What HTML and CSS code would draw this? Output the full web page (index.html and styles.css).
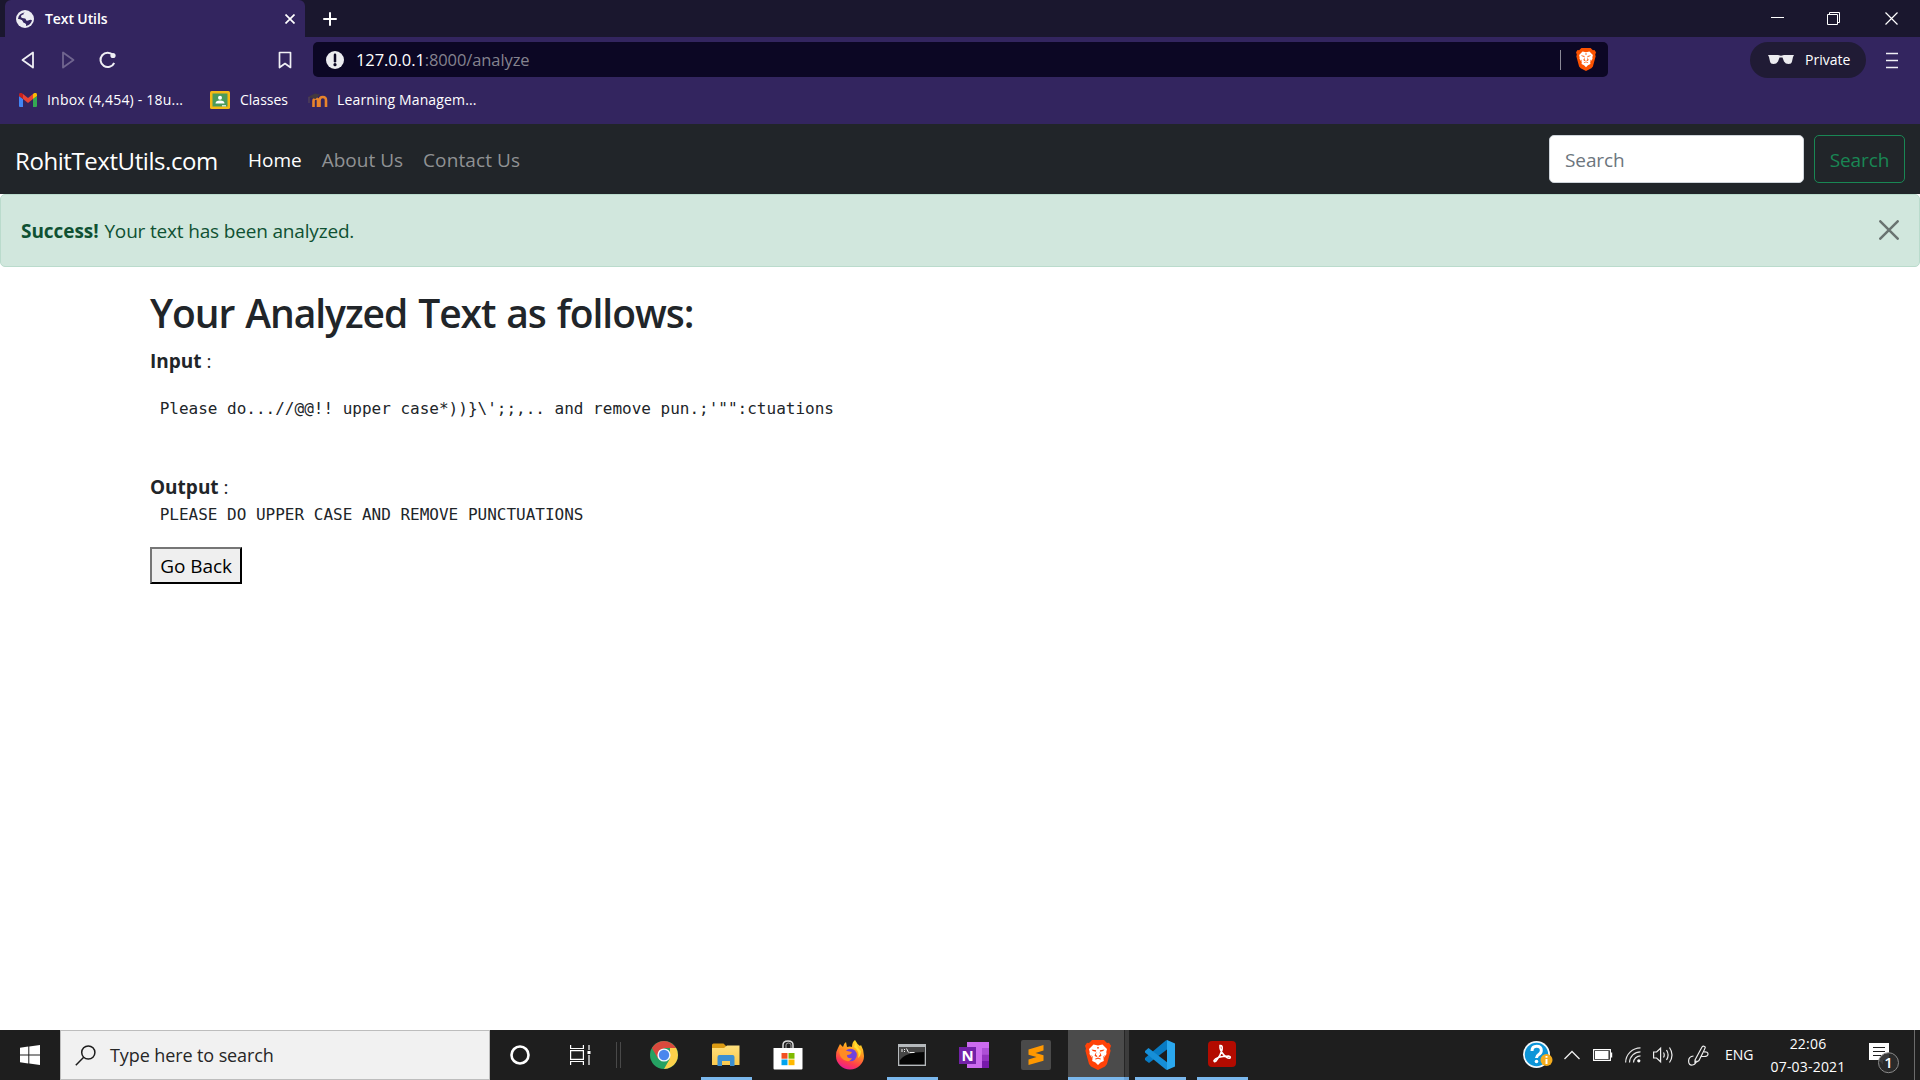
FILE: index.html
```html
<!DOCTYPE html>
<html lang="en">
<head>
<meta charset="utf-8">
<title>Text Utils</title>
<link rel="stylesheet" href="styles.css">
</head>
<body>
<svg width="0" height="0" class="defs" aria-hidden="true">
  <defs>
    <linearGradient id="flame" x1="0.7" y1="0" x2="0.3" y2="1"><stop offset="0" stop-color="#ffe226"/><stop offset="0.4" stop-color="#ff9020"/><stop offset="0.75" stop-color="#ff3c4e"/><stop offset="1" stop-color="#e5189a"/></linearGradient>
    <linearGradient id="folder" x1="0" y1="0" x2="0" y2="1"><stop offset="0" stop-color="#ffe07d"/><stop offset="1" stop-color="#fbc94d"/></linearGradient>
    <symbol id="lion" viewBox="0 0 26 30">
      <path d="M7 0h12l3 3 2-.3 2 3-1 3 .6 2-3.600 13.300-2 2.500L13 30l-7-3.500-2-2.500L.4 10.700 1 8.700l-1-3 2-3L4 3z"/>
      <path fill="#fff" d="M8.500 4.500l4.500 1 4.500-1L22 9l-.7 3 .2 2-3 4.500.3 2.500-3.300 1.500-2.500 2.500-2.500-2.500L7.200 21l.3-2.500-3-4.500.2-2L4 9z"/>
      <path d="M6.500 9.500l4.700.8-.4 1.400-3-.8zM19.500 9.500l-4.700.8.4 1.400 3-.8zM12.400 7h1.200l.3 1-.9 1-.9-1zM11.500 11.500l-.6 3.300 1.700 1.500-1.400.8-1.700-1.600zM14.500 11.500l.6 3.300-1.700 1.500 1.400.8 1.700-1.600zM10 18.800l3-1.200 3 1.200-.5.700-2.500-.8-2.500.8zM6.300 14.800l1.500 2.200-.6 1.200zM19.700 14.800L18.200 17l.6 1.200z"/>
    </symbol>
  </defs>
</svg>

<header class="browser">
  <div class="tabstrip">
    <div class="tab">
      <svg class="globe" width="18" height="18" viewBox="0 0 18 18"><circle cx="9" cy="9" r="9" fill="#ececf2"/><path d="M9 2.200Q7 3 7.500 4.500 5 4.500 5 6.500t3 1.700q2 0 2 1.600t3.500.3q1.500-.8 2.500.2-1 4.700-6 5.700.7-2-1-2.700-2-.3-2.500-2Q6 9.500 2 9 2.500 3.500 9 2.200z" fill="#33255f"/><path d="M2.200 9.500L6 10.300l1 2.200v3Q3 14 2.200 9.500z" fill="#ececf2"/></svg>
      <span class="tab-title">Text Utils</span>
      <svg width="10" height="10" viewBox="0 0 10 10" fill="none" stroke="#fff" stroke-width="1.700"><path d="M.5.5l9 9M9.500.5l-9 9"/></svg>
    </div>
    <svg class="new-tab" width="14" height="14" viewBox="0 0 14 14" stroke="#fff" stroke-width="2" stroke-linecap="round"><path d="M7 1v12M1 7h12"/></svg>
    <svg class="win-controls" width="127" height="13" viewBox="0 0 127 13" fill="none" stroke="#fff"><path d="M0 5.500h13M56.500 2.500h10v10h-10zM58.500 2.500v-2h10v10h-2"/><path d="M114.500.5l12 12M126.500.5l-12 12" stroke-width="1.200"/></svg>
  </div>

  <div class="toolbar">
    <svg class="nav-buttons" width="96" height="18" viewBox="0 0 96 18" fill="none" stroke-width="1.800" stroke-linejoin="round"><path d="M12 1.500v15L1.500 9z" stroke="#efeff4"/><path d="M42 1.500v15L52.500 9z" stroke="#70658f"/><path d="M92 4a7.200 7.200 0 1 0 1.200 8" stroke="#efeff4" stroke-width="2"/><circle cx="92" cy="4.500" r="2.600" fill="#efeff4"/></svg>
    <svg class="bookmark" width="14" height="18" viewBox="0 0 14 18" fill="none" stroke="#efeff4" stroke-width="1.700" stroke-linejoin="round"><path d="M1.500 1.500h11v15L7 12.500l-5.500 4z"/></svg>
    <div class="address">
      <svg width="18" height="18" viewBox="0 0 18 18"><circle cx="9" cy="9" r="9" fill="#ececf0"/><path d="M9 3.800v6.400" stroke="#0c0724" stroke-width="2.500" stroke-linecap="round"/><circle cx="9" cy="13.700" r="1.600" fill="#0c0724"/></svg>
      <span class="url"><b>127.0.0.1</b>:8000/analyze</span>
      <span class="rule"></span>
      <svg width="20" height="23" fill="#fb5200"><use href="#lion"/></svg>
    </div>
    <div class="private">
      <svg width="26" height="10" viewBox="0 0 26 10" fill="#ececf0"><path d="M0 0h10l3 .8L16 0h10l-1 2-1 4.500Q23.500 9 20.500 9T16 6.500L14.500 2.500h-3L10 6.500Q8.500 9 5.500 9T2 6.500L1 2z"/></svg>
      <span>Private</span>
    </div>
    <svg width="12" height="17" viewBox="0 0 12 17" stroke="#efeff4" stroke-width="1.700"><path d="M0 1.500h12M0 8.500h12M0 15.500h12"/></svg>
  </div>

  <nav class="bookmarks">
    <span class="bm bm-mail"><svg width="18" height="14" viewBox="0 0 18 14"><path fill="#4285f4" d="M0 3l4 3v8H1q-1 0-1-1z"/><path fill="#34a853" d="M18 3l-4 3v8h3q1 0 1-1z"/><path fill="#ea4335" d="M4 1l5 4 5-4v5l-5 4-5-4z"/><path fill="#c5221f" d="M0 2q0-3 3-1.800L4 1v5L0 3z"/><path fill="#fbbc04" d="M18 2q0-3-3-1.800L14 1v5l4-3z"/></svg>Inbox (4,454) - 18u...</span>
    <span class="bm bm-class"><svg width="20" height="18" viewBox="0 0 20 18"><rect width="20" height="18" rx="1.500" fill="#f5ba15"/><path fill="#4b9b5b" d="M2.500 2.500h15v13h-15z"/><circle cx="10" cy="6.800" r="2" fill="#fff"/><path fill="#fff" d="M5.500 12.500q0-3 4.500-3t4.500 3z"/><path fill="#cfe5d2" d="M12 14h4v1.500h-4z"/></svg>Classes</span>
    <span class="bm bm-learn"><svg width="20" height="14" viewBox="0 0 20 14" fill="none"><path d="M5.500 14V8q0-2.500 2.300-2.500T10 8v6M11.500 14V7.500q0-3.500 3.300-3.500T18 7.500V14" stroke="#e8842c" stroke-width="2.600"/><path d="M0 4l7-3.500 5 1L7.500 6z" fill="#43393f"/><path d="M1 4v6" stroke="#5c4c55"/></svg>Learning Managem...</span>
  </nav>
</header>

<div class="page">
  <nav class="navbar">
    <a class="brand">RohitTextUtils.com</a>
    <a class="nav-link active">Home</a>
    <a class="nav-link">About Us</a>
    <a class="nav-link contact">Contact Us</a>
    <form class="search">
      <input type="text" placeholder="Search">
      <button type="button">Search</button>
    </form>
  </nav>
  <div class="alert">
    <p><strong>Success!</strong> Your text has been analyzed.</p>
    <svg class="dismiss" width="20" height="20" viewBox="0 0 20 20" stroke="#697370" stroke-width="2.500" stroke-linecap="round"><path d="M1.300 1.300l17.400 17.400M18.700 1.300L1.300 18.700"/></svg>
  </div>
  <main class="container">
    <h1>Your Analyzed Text as follows:</h1>
    <p><strong>Input</strong> :</p>
    <pre class="input-text"> Please do...//@@!! upper case*))}\';;,.. and remove pun.;'"":ctuations</pre>
    <p><strong>Output</strong> :</p>
    <pre class="output-text"> PLEASE DO UPPER CASE AND REMOVE PUNCTUATIONS</pre>
    <button class="back" type="button">Go Back</button>
  </main>
</div>

<footer class="taskbar">
  <div class="start"><svg width="20" height="20" viewBox="0 0 20 20" fill="#fff"><path d="M0 2.800l8.300-1.200v7.900H0zM9.300 1.400L20 0v9.500H9.300zM0 10.500h8.300v7.900L0 17.200zM9.300 10.500H20V20L9.300 18.600z"/></svg></div>
  <div class="task-search">
    <svg width="21" height="21" viewBox="0 0 21 21" fill="none" stroke="#1c1c1c" stroke-width="1.500"><circle cx="13.300" cy="7.500" r="6.600"/><path d="M8.700 12.200L.8 20.200"/></svg>
    <span>Type here to search</span>
  </div>
  <div class="cell system"><svg width="20" height="20" viewBox="0 0 20 20" fill="none" stroke="#fff" stroke-width="2.600"><circle cx="10" cy="10" r="8.500"/></svg></div>
  <div class="cell system"><svg width="21" height="20" viewBox="0 0 21 20" fill="none" stroke="#fff" stroke-width="1.200"><path d="M.6 0v3.500h12.800V0M.6 5.600h12.800v8.800H.6zM.6 20v-3.500h12.800V20M19 0v5M19 10v10"/><path d="M17.500 6h3v3h-3z" fill="#fff" stroke="none"/></svg></div>
  <div class="divider"></div>

  <div class="apps">
    <div class="cell"><svg width="28" height="28" viewBox="0 0 28 28"><circle cx="14" cy="14" r="14" fill="#25a162"/><path d="M1.900 7A14 14 0 0 1 26.100 7H14l-6 10.500z" fill="#d9493d"/><path d="M26.100 7A14 14 0 0 1 14 28l6-10.500L20 7z" fill="#fcd04b"/><circle cx="14" cy="14" r="6.600" fill="#f3f6fb"/><circle cx="14" cy="14" r="5.200" fill="#4a87ee"/></svg></div>
    <div class="cell open"><svg width="28" height="24" viewBox="0 0 28 24"><path d="M0 2q0-1.500 1.500-1.500h10L14 3v3H0z" fill="#dc9b13"/><path d="M0 5h12l3-2.500h12.500V22H0z" fill="url(#folder)"/><path d="M5.500 23V14q0-2 2-2h13q2 0 2 2v9h-4.500v-5h-8v5z" fill="#3d8fd1"/></svg></div>
    <div class="cell"><svg width="30" height="30" viewBox="0 0 30 30"><path d="M10 8V5q0-4 5-4t5 4v3" fill="none" stroke="#ddd" stroke-width="1.500"/><path d="M13 8V5q0-2 2.500-2T18 5v3" fill="none" stroke="#aaa"/><path d="M.5 8h29v20.500q0 1-1 1h-27q-1 0-1-1z" fill="#fff"/><path fill="#f25022" d="M8.500 13h6v5.700h-6z"/><path fill="#7fba00" d="M15.500 13h6v5.700h-6z"/><path fill="#00a4ef" d="M8.500 19.500h6v5.700h-6z"/><path fill="#ffb900" d="M15.500 19.500h6v5.700h-6z"/></svg></div>
    <div class="cell"><svg width="28" height="30" viewBox="0 0 28 30"><path d="M2 8l2-4 3 3q1-4 3-5l1 5q3-1 5 0 0-5 3-7 2 4 5 6l1-1q3 5 3 11A14 13.500 0 0 1 0 16q0-5 2-8z" fill="url(#flame)"/><circle cx="14.500" cy="15" r="6.300" fill="#7043dc"/><path d="M3 10q5-2 8 1l5 1q-1 3-5 3 0 4 5 3-2 5-8 2-5-3-5-10z" fill="#ff8b22"/><path d="M18 7q6 4 4 11 3-2 3-7-4-3-5-9z" fill="#ffdf32"/></svg></div>
    <div class="cell open"><svg class="console" width="28" height="24" viewBox="0 0 28 24"><path fill="#b5b9bc" d="M0 1h28v22H0z"/><path fill="#050505" d="M1.300 4h25.400v17.600H1.300z"/><path d="M1.300 4h25.400v5Q7 9 1.300 18z" fill="#454545"/><path d="M4 6v3M6.500 6v1M6.500 8v1M8.500 5.500l2 4M11.500 9.500h5" stroke="#eee" fill="none"/></svg></div>
    <div class="cell"><svg width="30" height="26" viewBox="0 0 30 26"><path fill="#cb6bee" d="M8 0h22v26H8z"/><path fill="#ad4fd6" d="M23 6h7v6.500h-7z"/><path fill="#9332bf" d="M23 12.500h7v6.500h-7z"/><path fill="#7719aa" d="M23 19h7v7h-7z"/><path fill="#7321a8" d="M0 5h17v17H0z"/><text x="8.500" y="18.700" text-anchor="middle" class="icon-letter">N</text></svg></div>
    <div class="cell"><svg width="30" height="30" viewBox="0 0 30 30"><rect width="30" height="30" rx="2" fill="#4a4a4a"/><path fill="#ff9800" d="M7.500 9.500L22.500 5v5.500l-8 2.400 8 2.400v5.500L7.500 25v-5.500l8-2.400-8-2.400z"/></svg></div>
    <div class="cell current"><svg width="26" height="30" fill="#ff4208"><use href="#lion"/></svg></div>
    <div class="cell open"><svg width="30" height="30" viewBox="0 0 30 30"><path d="M22 0L24 8 4 23 0 20v-2L20.500.8z" fill="#087bc4"/><path d="M0 11l3.500-3L23 23l-1 7-1.500-.8L0 12.500z" fill="#168fd8"/><path d="M22 0l8 3.500v23L22 30z" fill="#2aa8ef"/></svg></div>
    <div class="cell open"><svg class="reader" width="28" height="26" viewBox="0 0 28 26"><rect width="28" height="26" rx="4" fill="#b30b00"/><path d="M12 4.500q3-.5 2 4.500-1.500 6-6 11-2 1.500-2-.5 2-4 14.500-4.500 2.500.5 1.500 2-2.500 1-6.500-3.500Q11.500 9 12 4.500z" fill="none" stroke="#fff" stroke-width="1.600"/></svg></div>
  </div>

  <div class="tray">
    <svg width="30" height="28" viewBox="0 0 30 28"><circle cx="13.500" cy="13.500" r="13.500" fill="#f3f8fb"/><circle cx="13.500" cy="13.500" r="11.700" fill="#0d95d8"/><path d="M9 10q0-4.700 4.700-4.700T18.300 9.500q0 2.500-2.500 4-2.300 1.500-2.300 3.500" fill="none" stroke="#fff" stroke-width="3"/><circle cx="13.500" cy="20.500" r="1.800" fill="#fff"/><circle cx="23.500" cy="19" r="6" fill="#f4ac1d"/><path d="M23.500 15v1.800M23.500 18v5" stroke="#fff" stroke-width="2"/></svg>
    <svg class="chevron" width="16" height="10" viewBox="0 0 16 10" fill="none" stroke="#eee" stroke-width="1.300"><path d="M.5 9L8 1.500 15.500 9"/></svg>
    <svg class="battery" width="20" height="12" viewBox="0 0 20 12"><path d="M.6.6h16.800v10.800H.6z" fill="none" stroke="#fff" stroke-width="1.100"/><path d="M2 2h13.500v8H2zM18 3.500h1.200v5H18z" fill="#fff"/></svg>
    <svg class="wifi" width="16" height="16" viewBox="0 0 16 16" fill="none" stroke="#e4e4e4" stroke-width="1.200"><path d="M.6 15.500A15 15 0 0 1 15.500.8M4.500 15.500A11 11 0 0 1 15.500 4.800M8.500 15.500a7 7 0 0 1 7-6.700"/><circle cx="13.800" cy="13.800" r="1.600" fill="#fff" stroke="none"/></svg>
    <svg class="volume" width="21" height="18" viewBox="0 0 21 18" fill="none" stroke="#eee" stroke-width="1.200"><path d="M.6 6h3l4-3.800v13.600L3.600 12h-3zM10.500 6.500q1.500 2.500 0 5M13.500 4q3.200 5 0 10M16.500 1.500q5 7.500 0 15"/></svg>
    <svg class="pen" width="21" height="21" viewBox="0 0 21 21" fill="none" stroke="#eee" stroke-width="1.200"><path d="M7 15L14 2q1.500-2 3.300.2Q17.500 3 11 15.500L7 18zM5.500 11Q.6 11.500.6 16T4.500 20Q8 19.500 8 15.500M16 7q4-.5 4 2t-4 2.500-3 0"/></svg>
    <span class="lang">ENG</span>
    <div class="clock"><span>22:06</span><span>07-03-2021</span></div>
    <svg class="notes" width="30" height="31" viewBox="0 0 30 31"><path d="M0 0h20v17H14v4.500L9.500 17H0z" fill="#fff"/><path d="M4 4.500h12M4 8.500h12M4 12.500h8" stroke="#1e1e1e" stroke-width="1.200"/><circle cx="19.500" cy="19.700" r="10" fill="#2b2b2b" fill-opacity=".92" stroke="#8b8b8b"/><text x="19.500" y="25.400" text-anchor="middle" class="badge-number">1</text></svg>
    <span class="peek"></span>
  </div>
</footer>
</body>
</html>
```
FILE: styles.css
```css
* { box-sizing: border-box; }

body {
  margin: 0;
  width: 1920px;
  height: 1080px;
  overflow: hidden;
  display: flex;
  flex-direction: column;
  background: #fff;
  color: #212529;
  font: 19px/30px "Open Sans", "Noto Sans", sans-serif;
}

svg { display: block; flex: none; }
.defs { position: absolute; }
p, h1, pre { margin: 0; }

/* Browser frame */
.browser {
  height: 124px;
  background: #33255f;
  color: #fff;
  font-size: 14px;
  line-height: 20px;
}

.tabstrip {
  height: 37px;
  display: flex;
  align-items: center;
  padding: 0 22px 0 5px;
  background: #1a172e;
}

.tab {
  width: 300px;
  height: 37px;
  display: flex;
  align-items: center;
  padding: 0 10px 0 11px;
  background: #33255f;
  border-radius: 6px 6px 0 0;
}

.tab-title { margin-left: 11px; flex: 1; font-weight: 600; letter-spacing: -0.1px; }
.new-tab { margin-left: 18px; }
.win-controls { margin-left: auto; }

.toolbar {
  height: 46px;
  display: flex;
  align-items: center;
  padding: 0 22px 0 21px;
}

.bookmark { margin-left: 161px; }

.address {
  width: 1295px;
  height: 35px;
  margin: 0 0 1px 21px;
  padding: 0 12px 0 13px;
  display: flex;
  align-items: center;
  background: #0c0724;
  border-radius: 5px;
}

.url { flex: 1; margin: 1px 0 0 12px; font-size: 16.5px; letter-spacing: -0.1px; color: #85838f; }
.url b { font-weight: 400; color: #fff; }
.rule { width: 1px; height: 20px; margin-right: 15px; background: #8a8896; }

.private {
  width: 116px;
  height: 36px;
  margin: 0 20px 0 142px;
  padding-left: 18px;
  display: flex;
  align-items: center;
  gap: 11px;
  background: #201b35;
  border-radius: 18px;
}

.bookmarks { display: flex; height: 34px; align-items: center; padding-left: 19px; }
.bm { display: flex; align-items: center; }
.bm-mail { width: 191px; gap: 10px; letter-spacing: 0.2px; }
.bm-class { width: 98px; gap: 10px; }
.bm-learn { gap: 9px; letter-spacing: 0.15px; }

/* Web page */
.page { flex: 1; background: #fff; }

.navbar {
  height: 70px;
  display: flex;
  align-items: center;
  padding: 0 15px;
  background: #212529;
}

.brand {
  width: 203px;
  margin-right: 20px;
  padding-top: 3px;
  color: #fff;
  font-size: 24px;
  letter-spacing: -0.42px;
  white-space: nowrap;
}

.nav-link { padding: 1px 10px 0; color: #909294; }
.nav-link.active { color: #fff; }
.nav-link.contact { letter-spacing: 0.1px; }

.search { display: flex; gap: 10px; margin-left: auto; }

.search input {
  width: 255px;
  height: 48px;
  padding: 2px 15px 0;
  border: 1px solid #ced4da;
  border-radius: 5px;
  background: #fff;
  font: inherit;
  letter-spacing: -0.1px;
}

.search input::placeholder { color: #6c757d; opacity: 1; }

.search button {
  width: 91px;
  height: 48px;
  padding: 1px 0 0;
  border: 1px solid #198754;
  border-radius: 5px;
  background: none;
  color: #198754;
  font: inherit;
  letter-spacing: -0.1px;
}

.alert {
  height: 73px;
  display: flex;
  justify-content: space-between;
  align-items: center;
  padding: 0 20px;
  background: #d1e7dd;
  border: 1px solid #badbcc;
  border-radius: 5px;
  color: #0f5132;
  letter-spacing: -0.17px;
}

.alert strong { margin-right: 1px; letter-spacing: -0.05px; }
.dismiss { margin-bottom: 2px; }

.container { padding: 22px 150px 0; }

h1 {
  margin-bottom: 9px;
  font-size: 39px;
  line-height: 48px;
  font-weight: 580;
  letter-spacing: -1.04px;
  word-spacing: 1.8px;
}

pre { font: 16px/26px "DejaVu Sans Mono", monospace; }
.input-text { margin: 20px 0 50px; }
.output-text { margin-bottom: 19px; }

.back {
  display: block;
  width: 92px;
  height: 37px;
  padding: 0;
  border: 2px outset #000;
  border-color: #767676 #1f1f1f #1f1f1f #767676;
  background: #efefef;
  color: #000;
  font: inherit;
  letter-spacing: -0.05px;
}

/* Taskbar */
.taskbar { height: 50px; display: flex; background: #1e1e1e; color: #fff; }
.start { width: 60px; display: flex; align-items: center; justify-content: center; }

.task-search {
  width: 430px;
  display: flex;
  align-items: center;
  gap: 14px;
  padding-left: 14px;
  background: #f1f1f1;
  border: 1px solid #bdbdbd;
  color: #262626;
  font-size: 18px;
  letter-spacing: -0.1px;
}

.cell { width: 62px; height: 50px; display: flex; align-items: center; justify-content: center; }
.cell.system { width: 60px; }
.divider { width: 5px; height: 26px; margin: 12px 12px 0 6px; border: solid #494949; border-width: 0 1px; }
.apps { display: flex; }

.open {
  background: linear-gradient(#7ab7ec, #7ab7ec) center bottom / 51px 3px no-repeat;
}

.console { margin-right: 1px; }
.reader { margin-bottom: 2px; }

.current {
  background:
    linear-gradient(#7ab7ec, #7ab7ec) 1px bottom / 56px 3px no-repeat,
    linear-gradient(#6ba3d6, #6ba3d6) 57px bottom / 5px 3px no-repeat,
    linear-gradient(90deg, transparent 1px, #4b4b4b 1px, #4b4b4b 57px, #262626 57px, #262626 58px, #3c3c3c 58px);
}

.icon-letter { font: bold 15px "Open Sans", sans-serif; fill: #fff; }

.tray { display: flex; align-items: center; margin-left: auto; font-size: 14px; }
.chevron { margin-left: 11px; }
.battery { margin-left: 13px; }
.wifi { margin-left: 12px; }
.volume { margin-left: 12px; }
.pen { margin-left: 14px; }
.lang { margin-left: 16px; width: 29px; }
.clock { width: 76px; margin-left: 16px; display: flex; flex-direction: column; text-align: center; line-height: 23px; letter-spacing: 0.2px; }
.notes { margin: 6px 0 0 23px; }
.badge-number { font: 600 15px "Open Sans", sans-serif; fill: #fff; }
.peek { width: 6px; height: 50px; margin-left: 15px; border-left: 1px solid #6b6b6b; }
```
